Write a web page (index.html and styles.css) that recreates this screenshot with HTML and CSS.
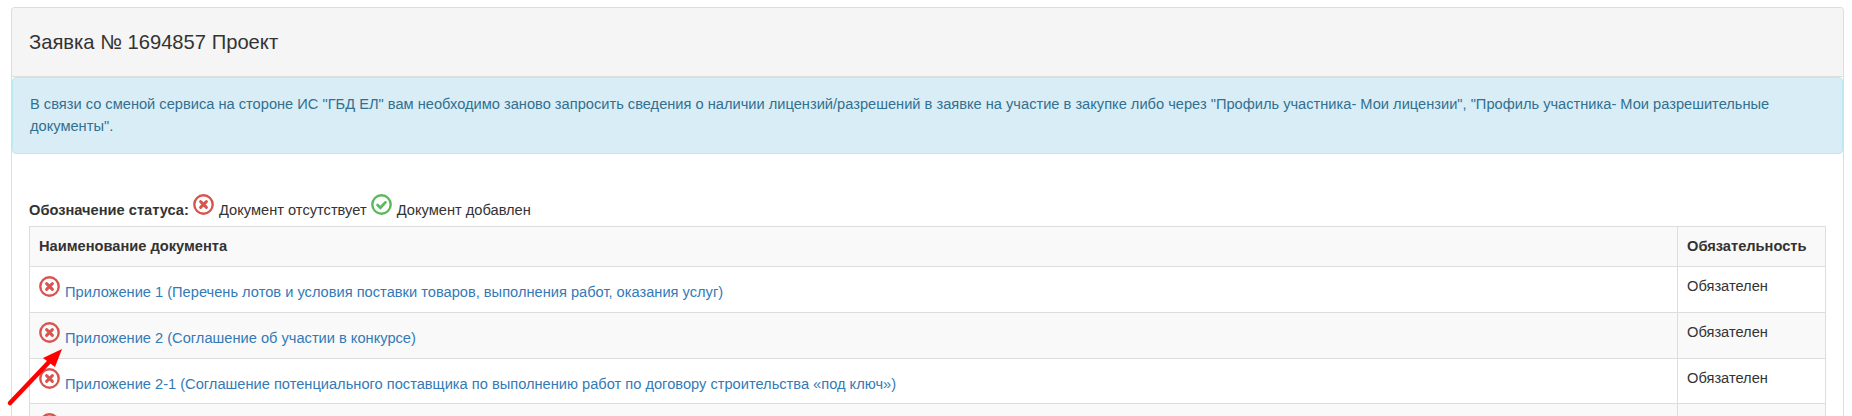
FILE: index.html
```html
<!DOCTYPE html>
<html lang="en">
<head>
  <meta charset="UTF-8">
  <title>Заявка № 1694857</title>
  <link rel="stylesheet" href="styles.css">
</head>
<body>
  <svg class="sprite" width="0" height="0">
    <symbol id="ico-no" viewBox="0 0 21 21">
      <circle cx="10.5" cy="10.5" r="9.2" fill="none" stroke="currentColor" stroke-width="2.4"/>
      <path d="M7.6 7.6l5.8 5.8M13.4 7.6l-5.8 5.8" fill="none" stroke="currentColor" stroke-width="3" stroke-linecap="round"/>
    </symbol>
    <symbol id="ico-ok" viewBox="0 0 21 21">
      <circle cx="10.5" cy="10.5" r="9.2" fill="none" stroke="currentColor" stroke-width="2.4"/>
      <path d="M6.6 11l2.8 2.8 5-5.4" fill="none" stroke="currentColor" stroke-width="2.8" stroke-linecap="round"/>
    </symbol>
  </svg>

  <div class="panel">
    <div class="panel-heading">Заявка № 1694857 Проект</div>
    <div class="alert">В связи со сменой сервиса на стороне ИС "ГБД ЕЛ" вам необходимо заново запросить сведения о наличии лицензий/разрешений в заявке на участие в закупке либо через "Профиль участника- Мои лицензии", "Профиль участника- Мои разрешительные документы".</div>
    <div class="panel-body">
      <p class="legend">
        <strong>Обозначение статуса:</strong>
        <svg class="ico no"><use href="#ico-no"/></svg> Документ отсутствует
        <svg class="ico ok"><use href="#ico-ok"/></svg> Документ добавлен
      </p>
      <table class="docs">
        <thead>
          <tr><th>Наименование документа</th><th class="col-req">Обязательность</th></tr>
        </thead>
        <tbody>
          <tr>
            <td><svg class="ico no"><use href="#ico-no"/></svg> <a href="#">Приложение 1 (Перечень лотов и условия поставки товаров, выполнения работ, оказания услуг)</a></td>
            <td>Обязателен</td>
          </tr>
          <tr>
            <td><svg class="ico no"><use href="#ico-no"/></svg> <a href="#">Приложение 2 (Соглашение об участии в конкурсе)</a></td>
            <td>Обязателен</td>
          </tr>
          <tr class="row-short">
            <td><svg class="ico no"><use href="#ico-no"/></svg> <a href="#">Приложение 2-1 (Соглашение потенциального поставщика по выполнению работ по договору строительства «под ключ»)</a></td>
            <td>Обязателен</td>
          </tr>
          <tr>
            <td><svg class="ico no"><use href="#ico-no"/></svg></td>
            <td></td>
          </tr>
        </tbody>
      </table>
    </div>
  </div>

  <svg class="arrow" width="70" height="70" viewBox="0 0 70 70">
    <path d="M10 63L49 22" stroke="#f00" stroke-width="4.5" stroke-linecap="round"/>
    <path d="M62 9L43 18L55 27Z" fill="#f00"/>
  </svg>
</body>
</html>
```

FILE: styles.css
```css
html, body {
  height: 416px;
  overflow: hidden;
}
body {
  box-sizing: border-box;
  display: flex;
  flex-direction: column;
  margin: 0;
  padding: 7px 8px 0 11px;
  background: #fff;
  color: #333;
  font-family: "Liberation Sans", Arial, sans-serif;
  font-size: 14.65px;
  line-height: 20px;
}
.sprite { position: absolute; }
a { color: #337ab7; text-decoration: none; }

.panel {
  flex: 1;
  min-height: 0;
  overflow: hidden;
  border: 1px solid #ddd;
  border-bottom: 0;
  border-radius: 4px 4px 0 0;
  background: #fff;
}
.panel-heading {
  height: 68px;
  padding: 0 17px;
  border-bottom: 1px solid #ddd;
  background: #f5f5f5;
  font-size: 20.2px;
  line-height: 68px;
}
.alert {
  padding: 15px 17px 16px;
  border: 1px solid #bce8f1;
  border-radius: 4px;
  background: #d9edf7;
  color: #31708f;
  line-height: 22px;
}
.panel-body { padding: 40px 17px 0; }
.legend { margin: 0 0 6px; }

.ico {
  width: 21px;
  height: 21px;
  margin-right: 1px;
  vertical-align: baseline;
}
.ico.no { color: #d9534f; }
.ico.ok { color: #5cb85c; }

.docs {
  width: 100%;
  border-collapse: collapse;
  table-layout: fixed;
}
.docs th, .docs td {
  border: 1px solid #ddd;
  padding: 9px 8px 7px 9px;
  text-align: left;
  vertical-align: top;
}
.docs th { height: 23px; background: #f9f9f9; }
.docs td { height: 29px; }
.docs .row-short td { height: 28px; }
.col-req { width: 130px; }
.docs tbody tr:nth-child(even) { background: #f9f9f9; }

.arrow {
  position: absolute;
  left: 0;
  top: 340px;
}
```
